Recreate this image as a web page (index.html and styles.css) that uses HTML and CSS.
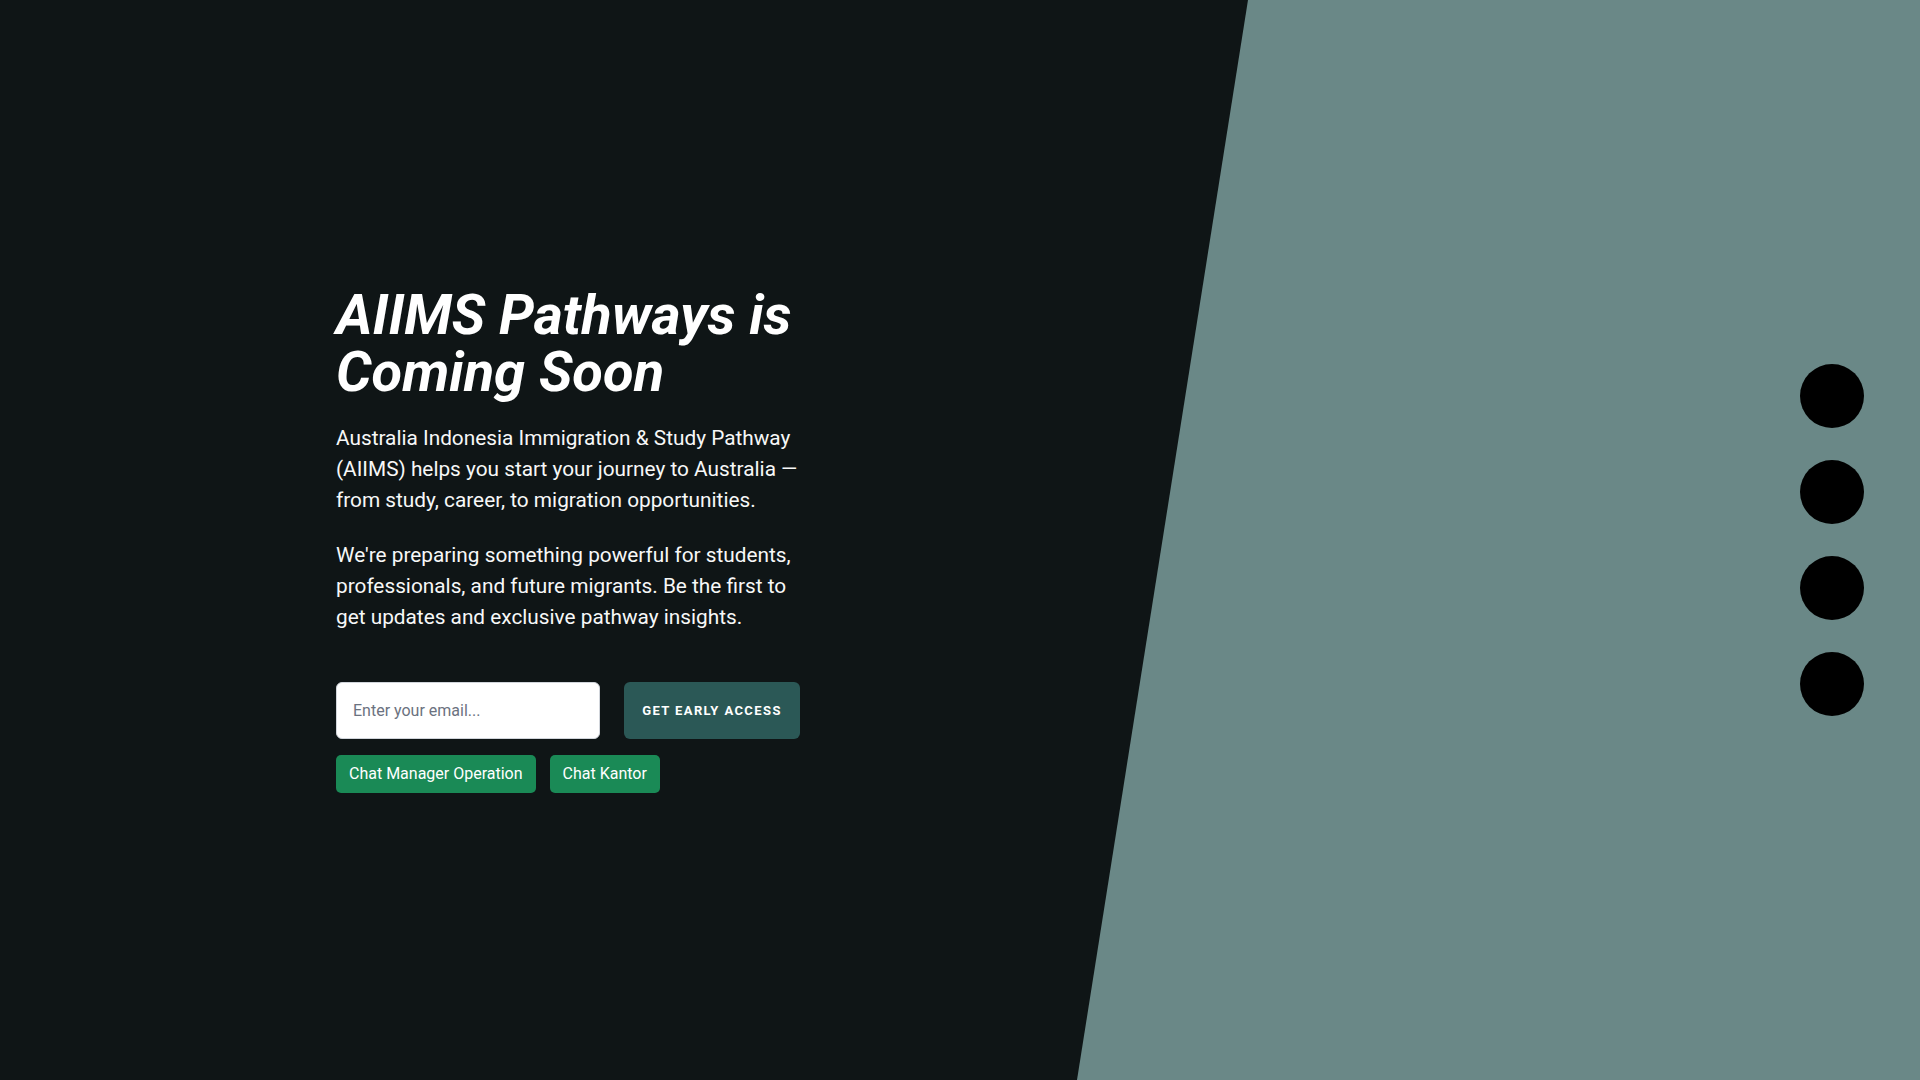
FILE: index.html
```html
<!DOCTYPE html>
<html lang="en">
<head>
<meta charset="utf-8">
<title>AIIMS Pathways - Coming Soon</title>
<link rel="stylesheet" href="styles.css">
</head>
<body>
<div class="page">
  <main class="intro">
    <div class="content">
      <h1 class="title">AIIMS Pathways is Coming Soon</h1>
      <p class="lead">Australia Indonesia Immigration &amp; Study Pathway (AIIMS) helps you start your journey to Australia — from study, career, to migration opportunities.</p>
      <p class="lead">We're preparing something powerful for students, professionals, and future migrants. Be the first to get updates and exclusive pathway insights.</p>
      <form class="signup">
        <input class="email" type="email" placeholder="Enter your email...">
        <button class="cta" type="button">GET EARLY ACCESS</button>
      </form>
      <div class="chats">
        <a class="chat" href="#">Chat Manager Operation</a>
        <a class="chat" href="#">Chat Kantor</a>
      </div>
    </div>
  </main>
  <aside class="panel">
    <ul class="dots">
      <li class="dot"></li>
      <li class="dot"></li>
      <li class="dot"></li>
      <li class="dot"></li>
    </ul>
  </aside>
</div>
</body>
</html>
```

FILE: styles.css
```css
* { box-sizing: border-box; }
html, body { margin: 0; padding: 0; height: 100%; }
body {
  background: #0f1516;
  color: #ffffff;
  font-family: Roboto, "Noto Sans", "Liberation Sans", sans-serif;
  overflow: hidden;
}
.page {
  display: grid;
  grid-template-columns: 1077px 1fr;
  height: 1080px;
}
.intro {
  display: flex;
  align-items: center;
  padding-left: 336px;
}
.content {
  width: 464px;
}
.title {
  margin: 0 0 22px;
  font-size: 56px;
  line-height: 57px;
  font-weight: 700;
  font-style: italic;
}
.lead {
  margin: 0 0 24px;
  font-size: 20.8px;
  line-height: 31px;
  font-weight: 400;
  color: #f7f8f8;
}
.lead + .lead { margin-bottom: 49px; }
.signup {
  display: flex;
  gap: 24px;
  margin: 0;
}
.email {
  flex: 1;
  min-width: 0;
  height: 57px;
  border: 1px solid #d1d5db;
  border-radius: 6px;
  background: #ffffff;
  padding: 0 16px;
  font-family: Roboto, "Liberation Sans", sans-serif;
  font-size: 16px;
  color: #111;
}
.email::placeholder { color: #6b7280; }
.cta {
  width: 176px;
  height: 57px;
  border: 0;
  border-radius: 6px;
  background: #2b5856;
  color: #ffffff;
  font-family: Roboto, "Liberation Sans", sans-serif;
  font-size: 13px;
  font-weight: 700;
  letter-spacing: 1.4px;
}
.chats {
  display: flex;
  gap: 14px;
  margin-top: 16px;
}
.chat {
  display: block;
  padding: 7px 13px;
  border-radius: 5px;
  background: #1a8a56;
  color: #ffffff;
  text-decoration: none;
  font-size: 16px;
  line-height: 24px;
}
.panel {
  background: #6a8887;
  clip-path: polygon(171px 0, 100% 0, 100% 100%, 0 100%);
  display: flex;
  align-items: center;
  justify-content: flex-end;
  padding-right: 56px;
}
.dots {
  list-style: none;
  margin: 0;
  padding: 0;
  display: flex;
  flex-direction: column;
  gap: 32px;
}
.dot {
  width: 64px;
  height: 64px;
  border-radius: 50%;
  background: #000000;
}
```
